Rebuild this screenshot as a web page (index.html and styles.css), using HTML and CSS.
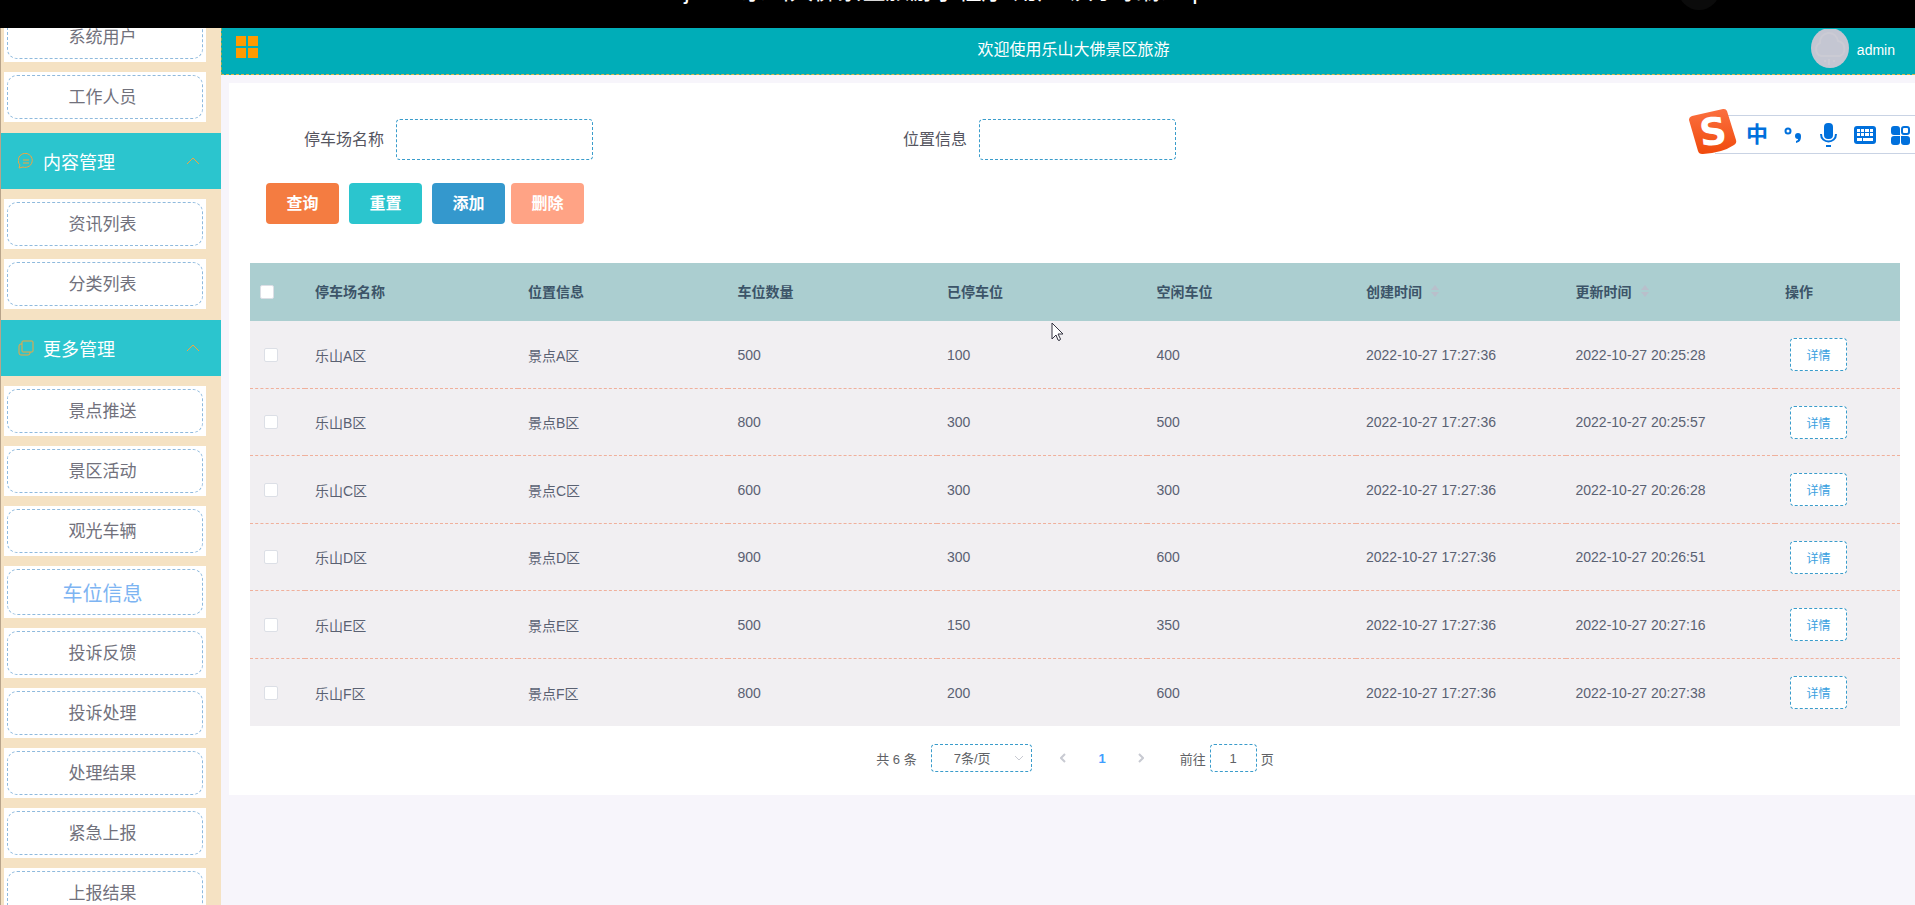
FILE: index.html
```html
<!DOCTYPE html>
<html lang="zh-CN">
<head>
  <meta charset="UTF-8">
  <meta name="viewport" content="width=device-width, initial-scale=1.0">
  <title>乐山大佛景区旅游</title>
  <link rel="stylesheet" href="styles.css">
</head>
<body>
  <div class="player-bar">
    <div class="player-title">java&nbsp; 乐山大佛景区旅游小程序-用户-演示录像.mp4</div>
    <span class="player-dot"></span>
  </div>
  <div class="layout">
    <nav class="sidebar">
      <div class="menu">
        <ul class="menu-list">
          <li><a href="#">系统用户</a></li>
          <li><a href="#">工作人员</a></li>
        </ul>
        <button class="menu-title" type="button">
          <svg class="menu-icon" viewBox="0 0 16 16"><path d="M1 15l1-3a7 7 0 1 1 3 2zM5 7h6M5 10h6"/></svg>
          <span>内容管理</span>
          <svg class="menu-arrow" viewBox="0 0 14 8"><path d="M1 7l6-6 6 6"/></svg>
        </button>
        <ul class="menu-list">
          <li><a href="#">资讯列表</a></li>
          <li><a href="#">分类列表</a></li>
        </ul>
        <button class="menu-title" type="button">
          <svg class="menu-icon" viewBox="0 0 16 16"><rect x="4" y="1" width="11" height="11" rx="1"/><path d="M4 4H3Q1 4 1 6V13Q1 15 3 15H10Q12 15 12 13V12"/></svg>
          <span>更多管理</span>
          <svg class="menu-arrow" viewBox="0 0 14 8"><path d="M1 7l6-6 6 6"/></svg>
        </button>
        <ul class="menu-list">
          <li><a href="#">景点推送</a></li>
          <li><a href="#">景区活动</a></li>
          <li><a href="#">观光车辆</a></li>
          <li><a href="#" class="active">车位信息</a></li>
          <li><a href="#">投诉反馈</a></li>
          <li><a href="#">投诉处理</a></li>
          <li><a href="#">处理结果</a></li>
          <li><a href="#">紧急上报</a></li>
          <li><a href="#">上报结果</a></li>
        </ul>
      </div>
    </nav>
    <div class="main">
      <header class="topbar">
        <button class="topbar-toggle" type="button" aria-label="菜单"><i></i><i></i><i></i><i></i></button>
        <div class="topbar-title">欢迎使用乐山大佛景区旅游</div>
        <a class="topbar-user" href="#">
          <svg class="avatar" viewBox="0 0 38 39"><ellipse cx="19" cy="19" rx="19" ry="20" fill="#c4c6d2"/><path d="M10 27a7 7 0 0 1-1-13 9 9 0 0 1 18-2 8 8 0 0 1 2 15z" fill="none" stroke="#cbcbd4" stroke-width="2"/><path d="M14 31v2M18 30v6M23 31v2" stroke="#cbcbd4" stroke-width="2"/></svg>
          <span>admin</span>
        </a>
      </header>
      <section class="panel">
        <form class="search">
          <div class="search-item">
            <label for="park-name">停车场名称</label>
            <input id="park-name" type="text">
          </div>
          <div class="search-item">
            <label for="park-place">位置信息</label>
            <input id="park-place" type="text">
          </div>
        </form>
        <div class="actions">
          <button class="btn query" type="button">查询</button>
          <button class="btn reset" type="button">重置</button>
          <div class="actions-edit">
            <button class="btn add" type="button">添加</button>
            <button class="btn remove" type="button">删除</button>
          </div>
        </div>
        <table class="list">
          <colgroup>
            <col class="col-check"><col class="col-name"><col><col><col><col><col><col><col class="col-op">
          </colgroup>
          <thead>
            <tr>
              <th><input type="checkbox" aria-label="全选"></th>
              <th>停车场名称</th>
              <th>位置信息</th>
              <th>车位数量</th>
              <th>已停车位</th>
              <th>空闲车位</th>
              <th>创建时间<svg class="sort" viewBox="0 0 8 12"><path d="M0 5l4-5 4 5zM0 7l4 5 4-5z"/></svg></th>
              <th>更新时间<svg class="sort" viewBox="0 0 8 12"><path d="M0 5l4-5 4 5zM0 7l4 5 4-5z"/></svg></th>
              <th>操作</th>
            </tr>
          </thead>
          <tbody>
            <tr>
              <td><input type="checkbox" aria-label="选择乐山A区"></td>
              <td>乐山A区</td><td>景点A区</td><td>500</td><td>100</td><td>400</td>
              <td>2022-10-27 17:27:36</td><td>2022-10-27 20:25:28</td>
              <td><button class="detail" type="button">详情</button></td>
            </tr>
            <tr>
              <td><input type="checkbox" aria-label="选择乐山B区"></td>
              <td>乐山B区</td><td>景点B区</td><td>800</td><td>300</td><td>500</td>
              <td>2022-10-27 17:27:36</td><td>2022-10-27 20:25:57</td>
              <td><button class="detail" type="button">详情</button></td>
            </tr>
            <tr>
              <td><input type="checkbox" aria-label="选择乐山C区"></td>
              <td>乐山C区</td><td>景点C区</td><td>600</td><td>300</td><td>300</td>
              <td>2022-10-27 17:27:36</td><td>2022-10-27 20:26:28</td>
              <td><button class="detail" type="button">详情</button></td>
            </tr>
            <tr>
              <td><input type="checkbox" aria-label="选择乐山D区"></td>
              <td>乐山D区</td><td>景点D区</td><td>900</td><td>300</td><td>600</td>
              <td>2022-10-27 17:27:36</td><td>2022-10-27 20:26:51</td>
              <td><button class="detail" type="button">详情</button></td>
            </tr>
            <tr>
              <td><input type="checkbox" aria-label="选择乐山E区"></td>
              <td>乐山E区</td><td>景点E区</td><td>500</td><td>150</td><td>350</td>
              <td>2022-10-27 17:27:36</td><td>2022-10-27 20:27:16</td>
              <td><button class="detail" type="button">详情</button></td>
            </tr>
            <tr>
              <td><input type="checkbox" aria-label="选择乐山F区"></td>
              <td>乐山F区</td><td>景点F区</td><td>800</td><td>200</td><td>600</td>
              <td>2022-10-27 17:27:36</td><td>2022-10-27 20:27:38</td>
              <td><button class="detail" type="button">详情</button></td>
            </tr>
          </tbody>
        </table>
        <div class="pagination">
          <span>共 6 条</span>
          <div class="page-size">
            <select aria-label="每页条数"><option>7条/页</option></select>
            <svg viewBox="0 0 10 6"><path d="M1 1l4 4 4-4"/></svg>
          </div>
          <div class="pager">
            <button type="button" aria-label="上一页"><svg viewBox="0 0 6 10"><path d="M5 1L1 5l4 4"/></svg></button>
            <button type="button" class="current">1</button>
            <button type="button" aria-label="下一页"><svg viewBox="0 0 6 10"><path d="M1 1l4 4-4 4"/></svg></button>
          </div>
          <div class="jump">
            <label for="jump-page">前往</label>
            <input id="jump-page" type="text" value="1">
            <span>页</span>
          </div>
        </div>
      </section>
    </div>
  </div>

  <!-- input method toolbar -->
  <div class="ime">
    <svg class="ime-logo" viewBox="0 0 48 46">
      <defs><linearGradient id="ime-fill" x1="0" y1="0" x2="0" y2="1"><stop offset="0" stop-color="#fb7040"/><stop offset="1" stop-color="#f04a0c"/></linearGradient></defs>
      <path d="M3 7L34 0Q37-.5 38 2L47 31Q48 34 45 36Q33 44 14 45Q10 45.500 9 42L0 11Q0 8 3 7z" fill="url(#ime-fill)"/>
      <text x="24" y="36" text-anchor="middle" transform="rotate(-6 24 23)">S</text>
    </svg>
    <button type="button" class="ime-lang">中</button>
    <button type="button" aria-label="标点"><svg viewBox="0 0 22 24"><circle cx="6" cy="8" r="2.500" fill="none" stroke="#0070dc" stroke-width="2"/><path d="M13 13a3 3 0 1 1 6 0c0 4-1 6-5 7v-2c2-1 2-1 2-2-2 0-3-1-3-3z"/></svg></button>
    <button type="button" aria-label="语音"><svg viewBox="0 0 22 24"><rect x="6" y="0" width="9" height="16" rx="4"/><path d="M3 11c0 10 15 10 15 0" fill="none" stroke="#0070dc" stroke-width="2"/><rect x="8" y="22" width="5" height="2"/></svg></button>
    <button type="button" aria-label="键盘"><svg viewBox="0 0 22 24"><rect x="0" y="3" width="22" height="18" rx="3"/><path d="M3 6h3v3H3zM7 6h3v3H7zM11 6h4v3h-4zM16 6h3v3h-3zM3 10h3v3H3zM7 10h3v3H7zM11 10h4v3h-4zM16 10h3v3h-3zM3 15h5v3H3zM9 15h10v3H9z" fill="#fff"/></svg></button>
    <button type="button" aria-label="工具箱"><svg viewBox="0 0 22 24"><path d="M4 3h3q3 0 3 3v6H4q-3 0-3-3V6q0-3 3-3zM4 13h6v6q0 3-3 3H4q-3 0-3-3v-3q0-3 3-3zM11 13h6q3 0 3 3v3q0 3-3 3h-3q-3 0-3-3z"/><rect x="12" y="4" width="7" height="7" rx="2" fill="none" stroke="#0070dc" stroke-width="2"/></svg></button>
  </div>
  <svg class="cursor" viewBox="0 0 13 20"><path d="M1 1v16l4-4 2 5q1 1 2 0t0-2l-2-4h5z" fill="#fff" stroke="#333340"/></svg>
</body>
</html>
```

FILE: styles.css
```css
:root {
  --teal: #2bc5ce;
  --topbar: #00adb8;
  --sand: #f5e2c3;
  --page: #f7f5fb;
  --dash-blue: #3a9ccb;
  --ime-blue: #0070dc;
}
* {
  box-sizing: border-box;
}
html, body {
  height: 100%;
  margin: 0;
}
body {
  display: flex;
  flex-direction: column;
  overflow: hidden;
  position: relative;
  font-family: "Liberation Sans", "Noto Sans CJK SC", sans-serif;
  font-size: 14px;
  color: #5c6070;
  background: var(--page);
}
button, input, select {
  font-family: inherit;
  margin: 0;
}
button {
  padding: 0;
  border: none;
  background: none;
  cursor: pointer;
}
a {
  text-decoration: none;
}

/* Video title strip */
.player-bar {
  position: relative;
  flex: none;
  display: flex;
  align-items: flex-start;
  justify-content: center;
  height: 28px;
  overflow: hidden;
  background: #000;
}
.player-title {
  margin-top: -23px;
  padding-right: 12px;
  font-size: 24px;
  line-height: 28px;
  white-space: nowrap;
  color: #fff;
}
.player-dot {
  position: absolute;
  top: -32px;
  right: 195px;
  width: 42px;
  height: 42px;
  border-radius: 50%;
  background: #0b0b0b;
}

.layout {
  flex: 1;
  display: flex;
  min-height: 0;
}

/* Sidebar */
.sidebar {
  flex: none;
  width: 221px;
  overflow: hidden;
  border-left: 1px solid #b8a48a;
  background: var(--sand);
}
.menu {
  margin-top: -26px;
}
.menu-list {
  display: flex;
  flex-direction: column;
  gap: 10px;
  margin: 0;
  padding: 10px 15px 11px 3px;
  list-style: none;
}
.menu-list li {
  padding: 3px;
  background: #fff;
}
.menu-list a {
  display: block;
  padding: 6px 5px 4px 0;
  border: 1px dashed #8fbadd;
  border-radius: 10px;
  font-size: 17px;
  line-height: 32px;
  text-align: center;
  color: #71717c;
}
.menu-list a.active {
  padding-top: 8px;
  padding-bottom: 4px;
  font-size: 20px;
  color: #7db4f2;
}
.menu-title {
  display: flex;
  align-items: center;
  gap: 9px;
  width: 100%;
  height: 56px;
  padding: 0 21px 0 17px;
  background: var(--teal);
  color: #fff;
  font-size: 18px;
}
.menu-title span {
  flex: 1;
  text-align: left;
}
.menu-icon, .menu-arrow {
  fill: none;
  stroke: #f5a53c;
  stroke-width: 1;
}
.menu-icon {
  width: 16px;
  height: 16px;
}
.menu-arrow {
  width: 14px;
  height: 8px;
}

/* Main column */
.main {
  flex: 1;
  min-width: 0;
}
.topbar {
  display: flex;
  align-items: center;
  justify-content: space-between;
  height: 47px;
  padding: 0 20px 6px 14px;
  border-bottom: 1px dashed #d9b44a;
  border-left: 1px dashed #8fae5a;
  background: var(--topbar);
  color: #fff;
}
.topbar-toggle {
  display: grid;
  grid-template-columns: 10px 10px;
  gap: 2px;
  width: 76px;
  padding-bottom: 2px;
}
.topbar-toggle i {
  height: 10px;
  background: #ff9a00;
}
.topbar-title {
  padding-left: 24px;
  font-size: 16px;
}
.topbar-user {
  display: flex;
  align-items: center;
  gap: 8px;
  color: #fff;
}
.topbar-user span {
  padding-top: 4px;
}
.avatar {
  width: 38px;
  height: 39px;
}

.panel {
  margin: 8px 0 0 8px;
  padding: 36px 15px 23px 21px;
  background: #fff;
}
.search {
  display: grid;
  grid-template-columns: 599fr 997fr;
  padding-left: 54px;
}
.search-item {
  display: flex;
  align-items: center;
  gap: 12px;
  font-size: 16px;
  color: #55555f;
}
.search-item label {
  padding-bottom: 3px;
}
.search-item input {
  width: 197px;
  height: 41px;
  padding: 0 12px;
  border: 1px dashed var(--dash-blue);
  border-radius: 4px;
  outline: none;
  background: #fff;
  font-size: 16px;
}
.actions {
  display: flex;
  gap: 10px;
  padding: 23px 16px 39px;
}
.actions-edit {
  display: flex;
  gap: 6px;
}
.btn {
  width: 73px;
  height: 41px;
  padding-bottom: 4px;
  border-radius: 4px;
  color: #fff;
  font-size: 16px;
  font-weight: bold;
}
.query { background: #f47c41; }
.reset { background: var(--teal); }
.add { background: #3498cd; }
.remove { background: #ffa385; }

/* Table */
.list {
  width: 100%;
  table-layout: fixed;
  border-collapse: separate;
  border-spacing: 0;
}
.col-check { width: 55px; }
.col-name { width: 213px; }
.col-op { width: 125px; }
.list th {
  height: 58px;
  padding: 0 10px 2px;
  background: #abced0;
  color: #3c5468;
  font-weight: bold;
  text-align: left;
}
.list td {
  height: 68px;
  padding: 0 10px;
  border-bottom: 1px dashed #f0b09c;
  background: #f1eff2;
  color: #5a6172;
}
.list tbody tr:nth-child(even) td {
  height: 67px;
}
.list tbody tr:last-child td {
  border-bottom: none;
}
.list td:first-child {
  padding-left: 14px;
}
.list th:first-child {
  padding-bottom: 0;
}
.list input {
  display: block;
  appearance: none;
  width: 14px;
  height: 14px;
  border: 1px solid #dcdfe6;
  border-radius: 2px;
  background: #fff;
}
.sort {
  width: 8px;
  height: 12px;
  margin-left: 9px;
  fill: #b9bfcb;
}
.detail {
  width: 57px;
  height: 33px;
  margin-left: 5px;
  border: 1px dashed var(--dash-blue);
  border-radius: 4px;
  background: #fff;
  color: #3a9fe0;
  font-size: 12px;
}

/* Pagination */
.pagination {
  display: flex;
  align-items: center;
  justify-content: center;
  gap: 14px;
  padding-top: 18px;
  font-size: 13px;
  color: #606266;
}
.page-size {
  position: relative;
}
.page-size select, .jump input {
  height: 28px;
  border: 1px dashed var(--dash-blue);
  border-radius: 4px;
  outline: none;
  background: #fff;
  color: #606266;
  font-size: 13px;
}
.page-size select {
  display: block;
  appearance: none;
  width: 101px;
  padding: 0 22px;
}
.page-size svg {
  position: absolute;
  top: 11px;
  right: 8px;
  width: 10px;
  height: 6px;
}
.page-size svg, .pager svg {
  fill: none;
  stroke: #c8cad2;
}
.pager {
  display: flex;
  gap: 4px;
}
.pager button {
  width: 35px;
  height: 28px;
  color: #606266;
  font-size: 13px;
}
.pager svg {
  width: 6px;
  height: 10px;
  stroke-width: 2;
}
.pager .current {
  color: #409eff;
  font-weight: bold;
}
.jump {
  display: flex;
  align-items: center;
  gap: 4px;
  padding-left: 7px;
}
.jump input {
  width: 47px;
  text-align: center;
}

/* Floating input method toolbar */
.ime {
  position: absolute;
  top: 115px;
  right: 0;
  display: flex;
  align-items: center;
  gap: 14px;
  height: 39px;
  padding: 0 3px 0 31px;
  border: 1px solid #c9d3e4;
  border-width: 1px 0;
  background: #fff;
}
.ime-logo {
  position: absolute;
  top: -7px;
  left: -26px;
  width: 48px;
  height: 46px;
  overflow: visible;
}
.ime-logo text {
  fill: #fff;
  font-family: "DejaVu Sans", sans-serif;
  font-size: 38px;
  font-weight: bold;
}
.ime button {
  width: 22px;
  height: 24px;
  color: var(--ime-blue);
}
.ime button svg {
  display: block;
  width: 22px;
  height: 24px;
  fill: var(--ime-blue);
}
.ime .ime-lang {
  font-size: 22px;
  font-weight: bold;
  line-height: 24px;
}

.cursor {
  position: absolute;
  top: 322px;
  left: 1051px;
  width: 13px;
  height: 20px;
}
```
